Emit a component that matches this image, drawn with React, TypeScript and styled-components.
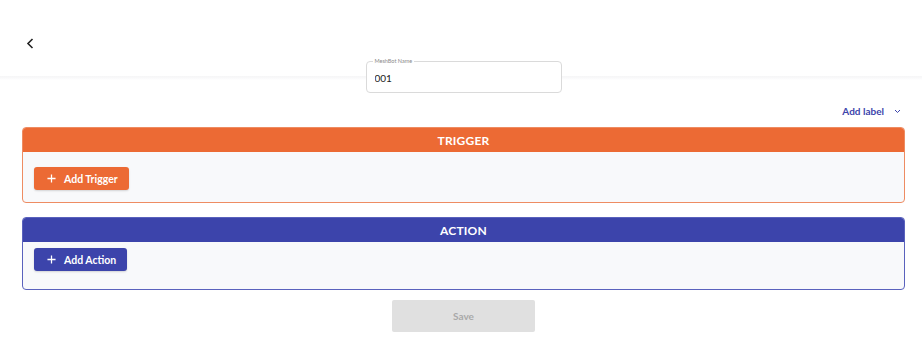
import styled, { createGlobalStyle } from "styled-components";

const GlobalStyle = createGlobalStyle`
  * { box-sizing: border-box; }
  body {
    margin: 0;
    background: #ffffff;
    font-family: "Lato", "Open Sans", sans-serif;
    color: #222;
  }
`;

const ORANGE = "#ec6a34";
const BLUE = "#3c44ab";

const Page = styled.div`
  width: 922px;
  height: 362px;
  background: linear-gradient(to bottom, transparent 76px, #f6f6f7 76px, #f9f9fa 78px, transparent 80px);
  padding: 0 17px 0 22px;
  display: flex;
  flex-direction: column;
`;

const TopBar = styled.div`
  height: 61px;
  display: flex;
  align-items: center;
  padding-top: 26px;
`;

const BackButton = styled.button`
  border: 0;
  background: none;
  padding: 0;
  width: 14px;
  height: 14px;
  display: flex;
  align-items: center;
  justify-content: center;
  cursor: pointer;
  color: #222;
  margin-left: 1px;
`;

const NameField = styled.label`
  position: relative;
  align-self: center;
  width: 196px;
  height: 32px;
  padding: 0 8px;
  border: 1px solid #dadada;
  border-radius: 4px;
  background: #fff;
  display: flex;
  align-items: center;
  input {
    border: 0;
    outline: none;
    background: none;
    width: 100%;
    font-family: inherit;
    font-size: 10px;
    color: #222;
    padding: 0;
    margin-top: 1px;
  }
`;

const FieldLabel = styled.span`
  position: absolute;
  top: -4px;
  left: 6px;
  padding: 0 2px;
  background: #fff;
  font-size: 5.5px;
  line-height: 7px;
  color: #8a8a8a;
`;

const LabelRow = styled.div`
  display: flex;
  justify-content: flex-end;
  margin-top: 10px;
  padding-right: 4px;
  height: 16px;
  align-items: center;
`;

const AddLabel = styled.button`
  border: 0;
  background: none;
  padding: 0;
  display: flex;
  align-items: center;
  gap: 10px;
  color: ${BLUE};
  font-family: inherit;
  font-weight: 700;
  font-size: 10px;
  cursor: pointer;
`;

const Card = styled.section<{ $border: string; $gap: number }>`
  border: 1px solid ${(p) => p.$border};
  border-radius: 4px;
  overflow: hidden;
  background: #f8f9fb;
  margin-top: ${(p) => p.$gap}px;
`;

const CardHeader = styled.div<{ $color: string }>`
  height: 24px;
  background: ${(p) => p.$color};
  color: #fff;
  font-weight: 700;
  font-size: 12px;
  display: flex;
  align-items: center;
  justify-content: center;
  letter-spacing: 0.2px;
`;

const CardBody = styled.div<{ $pad: string }>`
  padding: ${(p) => p.$pad};
`;

const AddButton = styled.button<{ $color: string }>`
  height: 23px;
  padding: 0 11px 0 13px;
  border: 0;
  border-radius: 3px;
  background: ${(p) => p.$color};
  color: #fff;
  font-family: inherit;
  font-weight: 700;
  font-size: 10.5px;
  display: inline-flex;
  align-items: center;
  gap: 8px;
  box-shadow: 0 1px 2px rgba(0, 0, 0, 0.15);
  cursor: pointer;
`;

const SaveRow = styled.div`
  display: flex;
  justify-content: center;
  margin-top: 10px;
`;

const SaveButton = styled.button`
  width: 143px;
  height: 32px;
  border: 0;
  border-radius: 2px;
  background: #e0e0e0;
  color: #a9a9a9;
  font-family: inherit;
  font-weight: 700;
  font-size: 10px;
`;

const Plus = () => (
  <svg width="9" height="9" viewBox="0 0 10 10">
    <path d="M5 0.5v9M0.5 5h9" stroke="#fff" strokeWidth="1.4" />
  </svg>
);

const sections = [
  { id: "trigger", title: "TRIGGER", button: "Add Trigger", color: ORANGE, border: "#ee8c62", pad: "15px 11px 12px", gap: 8 },
  { id: "action", title: "ACTION", button: "Add Action", color: BLUE, border: "#5a62bd", pad: "6px 11px 18px", gap: 14 },
];

const App = () => (
  <>
    <GlobalStyle />
    <Page>
      <TopBar>
        <BackButton aria-label="back">
          <svg width="8" height="11" viewBox="0 0 8 11">
            <path d="M6.5 1L2 5.5L6.5 10" fill="none" stroke="#222" strokeWidth="1.6" />
          </svg>
        </BackButton>
      </TopBar>
      <NameField>
        <FieldLabel>MeshBot Name</FieldLabel>
        <input defaultValue="001" />
      </NameField>
      <LabelRow>
        <AddLabel>
          Add label
          <svg width="7" height="5" viewBox="0 0 7 5">
            <path d="M1 1l2.5 2.5L6 1" fill="none" stroke={BLUE} strokeWidth="1" />
          </svg>
        </AddLabel>
      </LabelRow>
      {sections.map((s) => (
        <Card key={s.id} $border={s.border} $gap={s.gap}>
          <CardHeader $color={s.color}>{s.title}</CardHeader>
          <CardBody $pad={s.pad}>
            <AddButton $color={s.color}>
              <Plus />
              {s.button}
            </AddButton>
          </CardBody>
        </Card>
      ))}
      <SaveRow>
        <SaveButton disabled>Save</SaveButton>
      </SaveRow>
    </Page>
  </>
);

export default App;
